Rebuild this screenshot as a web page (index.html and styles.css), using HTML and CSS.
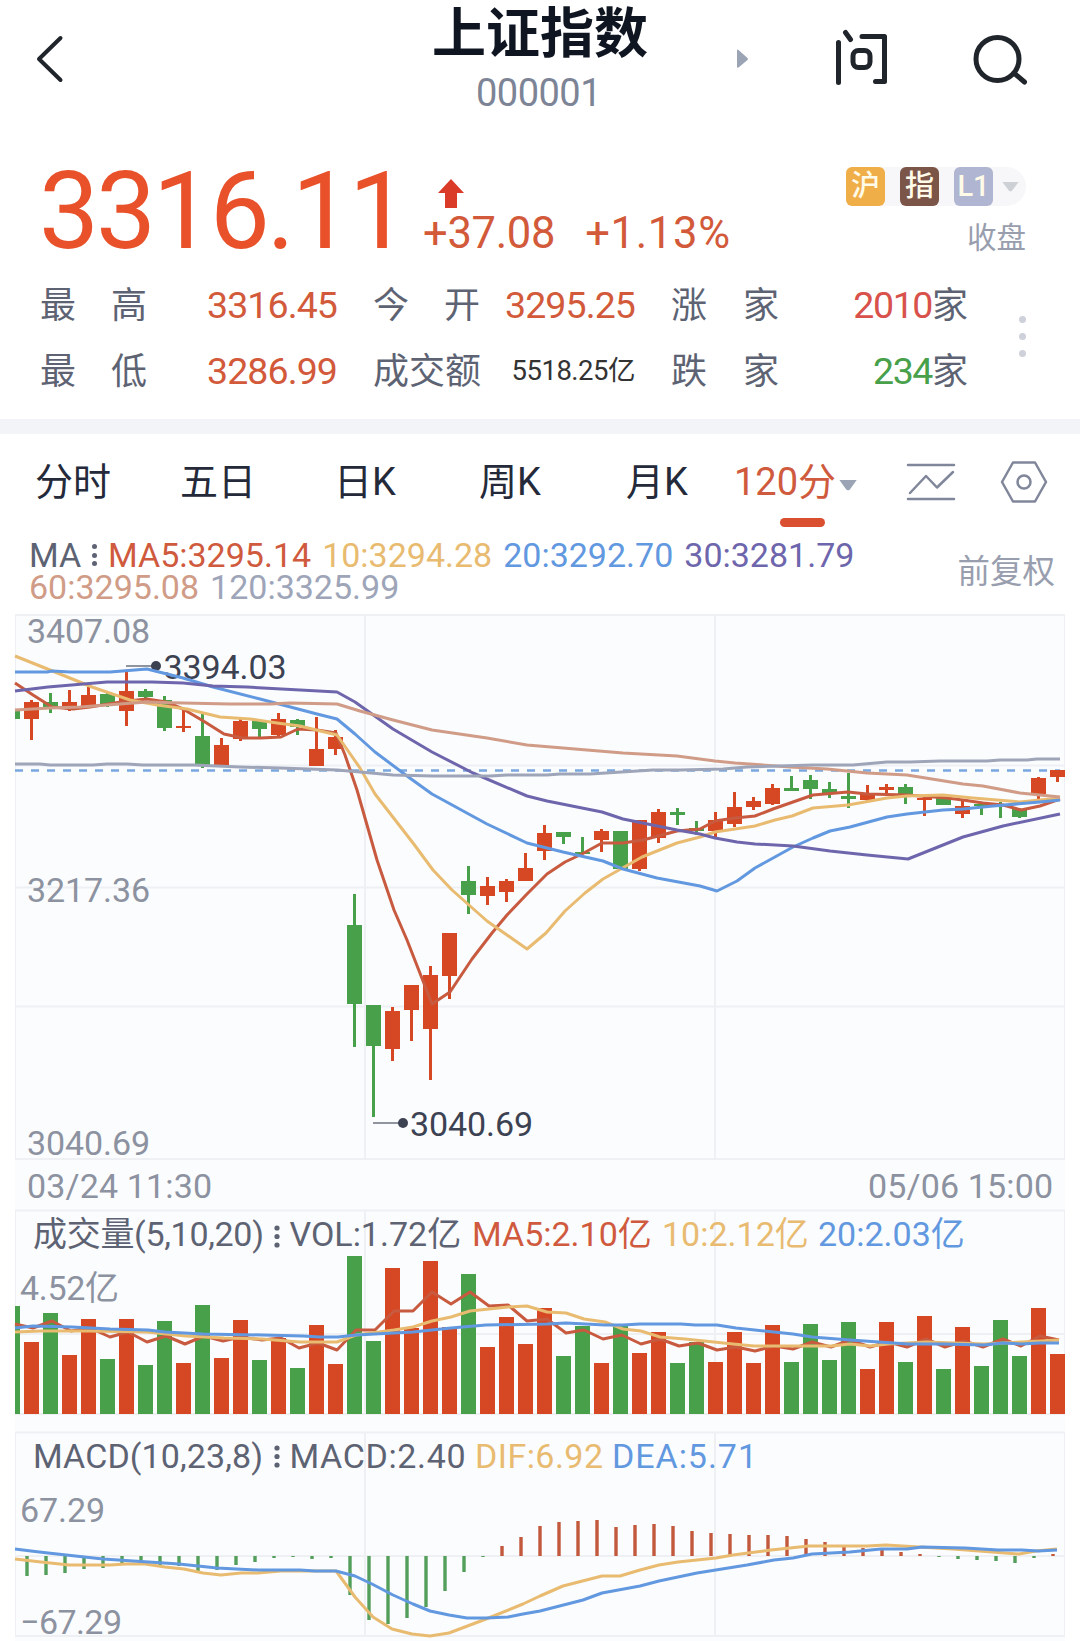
FILE: index.html
```html
<!DOCTYPE html>
<html lang="zh-CN">
<head>
  <meta charset="UTF-8" />
  <meta name="viewport" content="width=device-width, initial-scale=1.0"/>
  <title>上证指数 000001</title>
  <link rel="stylesheet" href="styles.css">
</head>
<body>
  <header class="topbar">
    <svg class="back" width="30" height="50" viewBox="0 0 30 50"><path d="M24.500 4L3 25L24.500 46"/></svg>
    <div class="title">
      <h1>上证指数</h1>
      <div class="code">000001</div>
    </div>
    <svg class="next" width="12" height="20" viewBox="0 0 12 20"><path d="M0 1.500Q0 0 1.500 1L10.500 9Q11.500 10 10.500 11L1.500 18.500Q0 19 0 18Z"/></svg>
    <svg class="ask" width="54" height="58" viewBox="0 0 54 58">
      <path d="M3.500 13.500V53.500M10.500 3.500L15.500 10.500M27 7.500H49.500V52.500H40.500"/>
      <rect x="18" y="21.500" width="17" height="17" rx="5.500"/>
    </svg>
    <svg class="search" width="56" height="52" viewBox="0 0 56 52"><circle cx="24.500" cy="25" r="21.500"/><path d="M41 39L51.500 48"/></svg>
  </header>

  <section class="quote">
    <div class="quote-top">
      <div class="price">3316.11</div>
      <div class="change">
        <svg width="28" height="30" viewBox="0 0 28 30"><path d="M14 0L27 14H20V29H8V14H1Z"/></svg>
        <div class="change-values"><span>+37.08</span><span class="percent">+1.13%</span></div>
      </div>
      <div class="market">
        <div class="badges">
          <span class="badge sh">沪</span>
          <span class="badge idx">指</span>
          <span class="badge l1">L1</span>
          <i class="caret"></i>
        </div>
        <div class="status">收盘</div>
      </div>
    </div>
    <div class="stats">
      <div class="label"><span>最</span><span>高</span></div><div class="value up">3316.45</div>
      <div class="label"><span>今</span><span>开</span></div><div class="value up">3295.25</div>
      <div class="label"><span>涨</span><span>家</span></div><div class="value count"><span class="rise">2010</span>家</div>
      <div class="label"><span>最</span><span>低</span></div><div class="value up">3286.99</div>
      <div class="label"><span>成</span><span>交</span><span>额</span></div><div class="value small">5518.25亿</div>
      <div class="label"><span>跌</span><span>家</span></div><div class="value count"><span class="fall">234</span>家</div>
    </div>
    <div class="more"><i></i><i></i><i></i></div>
  </section>

  <nav class="tabs">
    <span class="tab">分时</span>
    <span class="tab">五日</span>
    <span class="tab">日K</span>
    <span class="tab">周K</span>
    <span class="tab">月K</span>
    <span class="tab active">120分<i class="caret"></i></span>
    <svg class="tool" width="50" height="40" viewBox="0 0 50 40"><path d="M2 3H48M2 37H48M4 31L20 14L31 25.500L47 10"/></svg>
    <svg class="tool" width="48" height="42" viewBox="0 0 48 42"><path d="M13 1.500H35L46 21L35 40.500H13L2 21Z"/><circle cx="24" cy="21" r="6.500"/></svg>
  </nav>

  <section class="ma">
    <div class="ma-values">
      <div class="row">
        <span class="name">MA</span><b class="dots"><i></i><i></i><i></i></b>
        <span class="c5">MA5:3295.14</span><span class="c10">10:3294.28</span><span class="c20">20:3292.70</span><span class="c30">30:3281.79</span>
      </div>
      <div class="row"><span class="c60">60:3295.08</span><span class="c120">120:3325.99</span></div>
    </div>
    <div class="adjust">前复权</div>
  </section>

  <main class="charts">
    <svg id="kline" width="1080" height="596" viewBox="0 614 1080 596"></svg>
    <svg id="volume" width="1080" height="222" viewBox="0 1210 1080 222"></svg>
    <svg id="macd" width="1080" height="209" viewBox="0 1432 1080 209"></svg>
  </main>

  <script>
    const RED = "#d64824";
    const GREEN = "#48a04b";
    const STEP = 19;

    // one candle per entry: colour, body top, body bottom, wick top, wick bottom
    const candles = [
      ["g",710,719,710,719], ["r",702,719,700,740], ["g",702,707,693,713], ["r",702,707,690,711],
      ["r",695,707,687,707], ["g",694,704,693,707], ["r",691,711,672,726], ["g",691,697,689,698],
      ["g",700,728,696,731], ["r",726,728,710,732], ["g",736,765,714,768], ["r",745,766,738,766],
      ["r",721,739,719,741], ["g",721,729,721,737], ["r",719,735,713,737], ["g",720,727,719,735],
      ["r",749,766,717,766], ["r",737,749,730,755], ["g",925,1004,894,1047], ["g",1005,1046,1005,1117],
      ["r",1011,1049,1007,1061], ["r",985,1010,985,1041], ["r",975,1029,966,1080], ["r",933,976,933,999],
      ["g",881,895,866,914], ["r",886,896,877,905], ["r",881,892,879,902], ["r",868,881,853,881],
      ["r",833,851,825,860], ["g",832,837,832,844], ["g",852,854,837,854], ["r",831,840,829,852],
      ["g",831,869,831,869], ["r",820,869,820,871], ["r",812,838,809,843], ["g",812,815,808,825],
      ["g",828,831,821,835], ["r",820,831,812,838], ["r",807,824,792,827], ["r",801,807,797,810],
      ["r",788,804,784,805], ["g",788,791,776,791], ["g",780,789,775,799], ["g",789,794,782,798],
      ["g",796,799,773,808], ["r",793,800,785,801], ["r",787,790,784,796], ["g",787,794,784,804],
      ["r",798,800,797,816], ["g",798,805,798,805], ["r",806,814,800,818], ["g",804,806,803,815],
      ["g",804,806,802,818], ["g",809,817,808,818], ["r",778,794,777,800], ["r",770,777,770,782]
    ];

    const maLines = {
      "#c75a3f": "15,683 33,695 52,707 73,709 90,707 127,701 147,699 166,702 183,709 205,722 224,734 243,738 261,738 281,737 298,729 317,730 336,733 345,755 357,790 377,860 394,910 407,940 432,1004 450,992 472,959 492,933 507,915 527,894 547,874 565,862 582,854 602,843 623,843 643,840 677,831 700,829 715,821 735,818 755,816 773,809 793,802 813,795 848,792 867,794 907,795 947,798 963,800 983,803 1003,805 1021,810 1040,806 1060,799",
      "#e8bb70": "15,656 50,670 92,687 130,700 157,705 187,709 220,717 250,719 277,723 300,726 337,735 360,768 375,794 413,843 433,870 452,890 487,921 527,949 546,933 565,911 585,893 603,879 642,857 677,843 700,837 715,832 755,826 775,820 792,816 813,808 848,805 887,798 907,796 943,795 973,798 1020,802 1060,798",
      "#6198df": "15,672 47,672 52,671 70,672 110,672 147,669 183,678 213,687 260,699 317,714 337,719 355,734 375,752 407,776 432,794 487,824 527,843 563,852 603,861 623,869 657,878 700,886 717,891 737,881 755,868 793,847 813,838 830,831 850,827 887,817 907,814 943,810 963,809 993,806 1040,802 1060,800",
      "#6e66ac": "15,691 48,687 107,682 152,682 183,683 213,686 247,687 337,692 355,702 393,729 432,752 473,773 527,796 547,801 602,812 623,819 677,830 700,834 715,838 737,842 755,844 793,846 830,851 867,855 908,859 963,837 1003,826 1060,814",
      "#d09c87": "15,710 50,708 80,707 147,702 183,703 230,704 270,704 290,703 337,704 360,711 393,720 432,730 487,738 527,745 623,753 677,756 715,761 735,763 790,767 827,769 867,773 907,775 963,784 983,786 1020,793 1060,797",
      "#9ea5b9": "15,764 40,764 50,765 93,765 107,764 127,764 143,765 193,765 240,767 280,768 337,770 360,772 393,775 433,776 490,776 507,775 547,775 560,774 590,774 653,770 680,770 723,769 747,767 813,765 853,765 887,762 910,762 940,761 987,761 1000,760 1027,760 1037,759 1060,759"
    };

    const volumeTops = [
      1306,1342,1313,1355,1319,1359,1319,1365,1321,1363,1305,1358,1320,1360,1338,1368,1325,1364,
      1256,1341,1268,1328,1261,1327,1274,1347,1317,1344,1308,1356,1326,1363,1326,1353,1332,1363,
      1342,1362,1332,1363,1325,1362,1324,1360,1322,1369,1322,1362,1316,1369,1327,1366,1320,1356,1308,1354
    ];
    const volumeColors = "grgrrgrggrgrrgrgrrggrrrrgrrrrggrgrrggrrrrggggrrgrgrgggrr";

    const volumeLines = {
      "#c75a3f": "15,1324 33,1328 52,1321 71,1331 90,1328 110,1337 128,1332 147,1342 166,1336 185,1344 204,1336 223,1341 241,1337 262,1340 281,1338 299,1348 318,1343 337,1350 356,1330 375,1330 394,1311 413,1311 432,1292 451,1304 470,1292 489,1306 508,1305 527,1321 547,1319 566,1333 584,1330 603,1339 622,1335 641,1344 660,1339 679,1346 698,1343 717,1350 736,1347 755,1351 774,1346 793,1349 812,1342 831,1347 850,1340 870,1347 888,1342 907,1347 926,1339 945,1347 964,1341 983,1347 1003,1339 1021,1346 1040,1336 1059,1340",
      "#e8bb70": "15,1332 41,1331 90,1331 147,1332 186,1336 224,1338 262,1339 300,1342 337,1342 356,1335 394,1330 413,1327 432,1321 451,1317 470,1311 508,1307 527,1306 547,1312 566,1313 584,1319 605,1322 623,1329 641,1331 660,1337 685,1339 733,1344 754,1346 831,1346 850,1344 870,1346 888,1344 926,1342 984,1344 1022,1342 1059,1340",
      "#6198df": "15,1328 33,1326 72,1327 110,1329 148,1330 165,1332 203,1334 262,1335 303,1336 320,1337 338,1337 356,1335 413,1332 451,1328 486,1325 547,1324 566,1323 605,1325 623,1325 640,1324 681,1324 695,1325 717,1325 736,1328 793,1334 812,1337 850,1340 908,1344 943,1344 984,1345 1003,1343 1022,1344 1039,1343 1059,1343"
    };

    const macdZero = 1556;
    const macdEnds = [
      1576,1575,1573,1569,1568,1563,1563,1565,1566,1571,1570,1565,1562,1558,1557,1559,1558,1595,1620,
      1624,1618,1607,1591,1572,1557,1546,1537,1526,1522,1521,1520,1527,1525,1524,1526,1531,1533,1534,
      1535,1535,1536,1539,1542,1546,1548,1550,1552,1554,1557,1559,1560,1561,1563,1558,1554
    ];
    const macdLines = {
      "#e8bb70": "15,1559 41,1562 69,1565 110,1565 126,1564 145,1564 165,1567 184,1569 203,1573 221,1575 241,1573 258,1573 281,1571 336,1571 339,1575 355,1597 373,1617 392,1629 412,1634 430,1636 449,1633 486,1619 523,1604 540,1596 563,1586 602,1576 620,1576 640,1570 659,1565 678,1562 716,1558 733,1555 748,1553 771,1550 809,1546 867,1546 886,1545 919,1547 953,1549 1019,1554 1036,1551 1057,1549",
      "#6198df": "15,1549 31,1551 48,1553 103,1559 179,1564 217,1568 258,1570 300,1570 315,1571 336,1571 355,1576 372,1584 393,1595 413,1604 430,1611 449,1615 467,1618 486,1618 508,1617 523,1614 540,1611 583,1600 602,1593 640,1586 659,1581 697,1573 747,1565 774,1560 793,1558 812,1554 850,1552 881,1549 907,1549 922,1547 965,1548 998,1550 1022,1550 1038,1551 1057,1550"
    };

    const rect = (x, y, w, h, fill) => `<rect x="${x}" y="${y}" width="${w}" height="${h}" fill="${fill}"/>`;
    const hline = y => rect(15, y - 1, 1050, 2, "#eff0f4");
    const vline = (x, y1, y2) => rect(x - 1, y1, 2, y2 - y1, "#eff0f4");
    // len fixes the drawn width of a label
    const text = (x, y, str, cls, len) => `<text x="${x}" y="${y}" class="${cls}"${len ? ` textLength="${len}"` : ""}>${str}</text>`;
    const color = c => c === "g" ? GREEN : RED;
    const dots = (x, y) => [0, 8.5, 17].map(d => `<circle cx="${x}" cy="${y + d}" r="2.6" fill="#5d6373"/>`).join("");
    const lines = set => Object.entries(set).map(([c, pts]) => `<polyline points="${pts}" stroke="${c}" class="line"/>`).join("");

    function frame(top, bottom, rows, gridBottom) {
      return rect(15, top, 1050, bottom - top, "#fbfcfe")
        + rows.map(hline).join("")
        + [365, 715].map(x => vline(x, top, gridBottom)).join("")
        + rect(15, top, 1, gridBottom - top, "#eff0f4") + rect(1064, top, 1, gridBottom - top, "#eff0f4");
    }

    function drawKline() {
      let s = frame(614, 1210, [615, 765.5, 887.5, 1006.5, 1159], 1159);
      s += text(27, 642.5, "3407.08", "axis", 123) + text(27, 901.5, "3217.36", "axis", 123) + text(27, 1154.5, "3040.69", "axis", 123);
      s += text(27, 1197.500, "03/24 11:30", "axis", 185) + text(868, 1197.500, "05/06 15:00", "axis", 185);
      s += `<path d="M15 770.500H1060" stroke="#79a7df" stroke-width="2.500" stroke-dasharray="8 8"/>`;
      candles.forEach(([c, top, bottom, high, low], i) => {
        const x = 12.5 + i * STEP;
        const left = Math.max(15, x - 7.5);
        s += rect(left, top, x + 7.5 - left, bottom - top, color(c));
        if (i) s += rect(x - 1.5, high, 3, low - high, color(c));
      });
      s += `<path d="M126 666H156M373 1123H403" stroke="#8f949f" stroke-width="2"/>`;
      s += `<circle cx="156" cy="666" r="5" fill="#3c4252"/><circle cx="403" cy="1123" r="5" fill="#3c4252"/>`;
      s += text(163.5, 678.5, "3394.03", "mark", 123) + text(410, 1135.5, "3040.69", "mark", 123);
      s += lines(maLines);
      document.getElementById("kline").innerHTML = s;
    }

    function drawVolume() {
      let s = frame(1210, 1432, [1210.5, 1334, 1414], 1414);
      volumeTops.forEach((top, i) => {
        const x = 5 + i * STEP;
        const left = Math.max(15, x);
        s += rect(left, top, x + 15 - left, 1414 - top, color(volumeColors[i]));
      });
      s += lines(volumeLines);
      s += text(33, 1246, "成交量(5,10,20)", "legend", 231) + dots(277, 1228) + text(289.5, 1246, "VOL:1.72亿", "legend");
      s += text(472, 1246, "MA5:2.10亿", "legend c5") + text(662, 1246, "10:2.12亿", "legend c10") + text(818, 1246, "20:2.03亿", "legend c20");
      s += text(20, 1299.5, "4.52亿", "axis", 99);
      document.getElementById("volume").innerHTML = s;
    }

    function drawMacd() {
      let s = frame(1432, 1641, [1432.5, macdZero, 1636], 1636);
      macdEnds.forEach((end, i) => {
        const up = end < macdZero;
        s += rect(25.3 + i * STEP, up ? end : macdZero, 3.4, Math.abs(end - macdZero), up ? "#c2583c" : "#539e5b");
      });
      s += lines(macdLines);
      s += text(33, 1468, "MACD(10,23,8)", "legend", 230) + dots(277, 1448) + text(289.5, 1468, "MACD:2.40", "legend", 176);
      s += text(475, 1468, "DIF:6.92", "legend c10", 128) + text(612, 1468, "DEA:5.71", "legend c20", 145);
      s += text(20, 1522, "67.29", "axis", 85) + text(20, 1634, "−67.29", "axis", 102);
      document.getElementById("macd").innerHTML = s;
    }

    drawKline();
    drawVolume();
    drawMacd();
  </script>
</body>
</html>
```

FILE: styles.css
```css
* {
  box-sizing: border-box;
}

body {
  margin: 0;
  width: 1080px;
  background: #fff;
  color: #5d6373;
  font-family: Roboto, "Noto Sans CJK SC", sans-serif;
  font-size: 34px;
  overflow: hidden;
}

svg {
  display: block;
  flex-shrink: 0;
  overflow: visible;
}

i {
  display: block;
}

/* top bar */
.topbar {
  display: flex;
  align-items: flex-start;
  height: 160px;
  padding-left: 36px;
}

.topbar svg {
  fill: none;
  stroke: #20242b;
  stroke-width: 5;
  stroke-linecap: round;
  stroke-linejoin: round;
}

.topbar .back {
  margin-top: 34px;
  stroke-width: 4;
}

.title {
  width: 216px;
  margin-left: 366px;
  text-align: center;
}

h1 {
  margin: 0;
  height: 72px;
  font-size: 54px;
  line-height: 70px;
  font-weight: 700;
  color: #101522;
  white-space: nowrap;
}

.code {
  font-size: 38px;
  line-height: 42px;
  color: #7c8496;
  margin-right: 3px;
  letter-spacing: -0.5px;
}

.topbar .next {
  margin: 49px 0 0 89px;
  fill: #9ba4b5;
  stroke: none;
}

.ask {
  margin: 29px 0 0 86px;
}

.search {
  margin: 34px 0 0 84px;
}

/* quote */
.quote {
  position: relative;
  height: 259px;
}

.quote-top {
  display: flex;
  height: 117px;
  padding: 0 54px 0 39px;
}

.price {
  width: 385px;
  font-size: 107px;
  line-height: 103px;
  letter-spacing: -3.2px;
  color: #e9512a;
}

.change {
  padding-top: 19px;
  color: #d25a3a;
}

.change svg {
  margin-left: 13px;
  fill: #da3b28;
}

.change-values {
  display: flex;
  gap: 30px;
  font-size: 43.5px;
  line-height: 51px;
  letter-spacing: -0.3px;
  margin: -1px 0 0 -1px;
}

.percent {
  letter-spacing: 0.7px;
}

.market {
  margin-left: auto;
  padding-top: 7px;
}

.badges {
  display: flex;
  align-items: center;
  gap: 15px;
  height: 39px;
  width: 180px;
  border-radius: 8px 20px 20px 8px;
  background: #f7f7fa;
}

.badge {
  width: 39px;
  height: 39px;
  border-radius: 6px;
  font-size: 29px;
  font-weight: 500;
  line-height: 39px;
  text-align: center;
  color: #fffbe8;
}

.sh {
  background: #f0ae49;
}

.idx {
  background: #7b5648;
}

.l1 {
  background: #b0b5d2;
}

.caret {
  width: 17px;
  height: 10px;
  background: #9aa4b5;
  clip-path: polygon(0 0, 100% 0, 60% 90%, 50% 100%, 40% 90%);
}

.badges .caret {
  margin-left: -6px;
  background: #cdd0d4;
}

.status {
  margin-top: 10px;
  font-size: 29.5px;
  line-height: 44px;
  text-align: right;
  color: #989eae;
}

.stats {
  display: grid;
  grid-template-columns: 107px 191px 142px 156px 143px 190px;
  grid-auto-rows: 66px;
  padding-left: 39px;
  line-height: 56px;
}

.label {
  display: flex;
  justify-content: space-between;
  font-size: 36px;
  position: relative;
  left: 1px;
  top: 1px;
}

.label:not(:nth-child(6n + 1)) {
  padding-left: 35px;
}

.value {
  text-align: right;
  font-size: 37.5px;
  letter-spacing: -0.9px;
}

.value.small {
  font-size: 27.5px;
  letter-spacing: -0.5px;
  color: #333;
}

.value.count {
  font-size: 36px;
  letter-spacing: 0;
}

.count span {
  font-size: 37.5px;
  letter-spacing: -1.4px;
}

.up {
  color: #d25a3a;
}

.rise {
  color: #d8514a;
}

.fall {
  color: #48a04b;
}

.more {
  position: absolute;
  right: 54px;
  top: 156px;
  display: grid;
  gap: 10px;
}

.more i {
  width: 7px;
  height: 7px;
  border-radius: 50%;
  background: #cfd1da;
}

/* period tabs */
.tabs {
  display: flex;
  align-items: center;
  height: 111px;
  border-top: 15px solid #f3f4f8;
  padding-left: 35px;
  font-size: 38px;
  color: #252a3a;
}

.tab {
  width: 150px;
  line-height: 96px;
  white-space: nowrap;
}

.tab:nth-child(1) {
  width: 145px;
}

.tab:nth-child(2) {
  width: 154px;
}

.tab:nth-child(3) {
  width: 145px;
}

.tab:nth-child(4) {
  width: 147px;
}

.tab:nth-child(5) {
  width: 108px;
}

.tab.active {
  position: relative;
  display: flex;
  align-items: center;
  width: 172px;
  color: #cf5a3d;
}

.active .caret {
  margin: 6px 0 0 3px;
  width: 18px;
  height: 11px;
}

.active::after {
  content: "";
  position: absolute;
  left: 46px;
  bottom: 3px;
  width: 45px;
  height: 9px;
  border-radius: 5px;
  background: #da4f2f;
}

.tool {
  fill: none;
  stroke: #81879a;
  stroke-width: 2.5;
  stroke-linecap: round;
  stroke-linejoin: round;
}

.tool + .tool {
  margin-left: 44px;
}

/* moving averages legend */
.ma {
  display: flex;
  justify-content: space-between;
  height: 84px;
  padding: 9px 25px 0 29px;
}

.row {
  display: flex;
  gap: 11px;
  line-height: 32px;
  white-space: nowrap;
}

.name {
  width: 50px;
}

.dots {
  display: grid;
  align-content: center;
  gap: 3.5px;
  margin: 0 0 0 2px;
}

.dots i {
  width: 5px;
  height: 5px;
  border-radius: 50%;
  background: #5d6373;
}

.adjust {
  font-size: 32.5px;
  line-height: 67px;
  color: #989eae;
}

.c5 { color: #cf5a3d; fill: #cf5a3d; }
.c10 { color: #e8bb70; fill: #e8bb70; }
.c20 { color: #6198df; fill: #6198df; }
.c30 { color: #6e66ac; fill: #6e66ac; }
.c60 { color: #d09c87; fill: #d09c87; }
.c120 { color: #9ea5b9; fill: #9ea5b9; }

/* charts */
.line {
  fill: none;
  stroke-width: 3;
  stroke-linejoin: round;
}

.axis {
  fill: #8c92a0;
}

.mark {
  fill: #3c4252;
}

.legend:not(.c5):not(.c10):not(.c20) {
  fill: #5d6373;
}
```
